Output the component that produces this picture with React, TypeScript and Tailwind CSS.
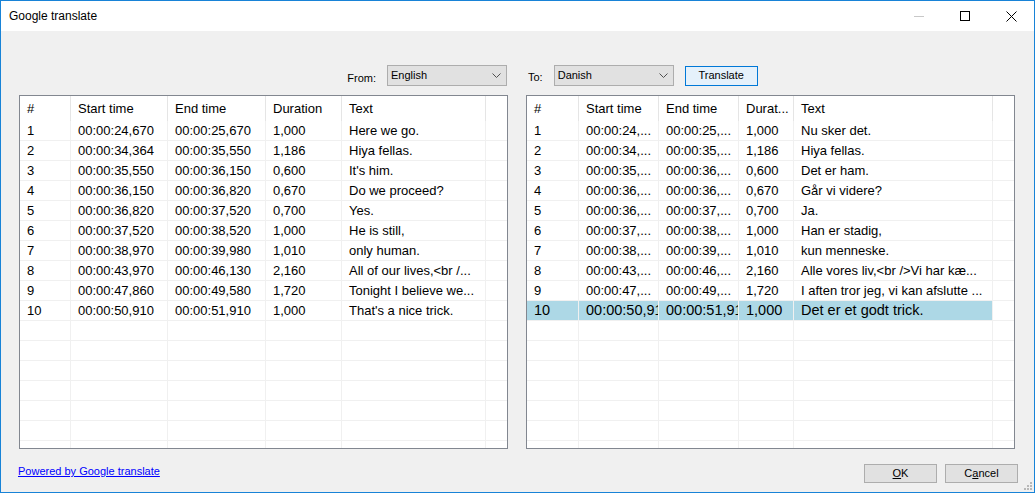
import React from 'react';

type Row = [string, string, string, string, string];

const leftRows: Row[] = [
  ['1', '00:00:24,670', '00:00:25,670', '1,000', 'Here we go.'],
  ['2', '00:00:34,364', '00:00:35,550', '1,186', 'Hiya fellas.'],
  ['3', '00:00:35,550', '00:00:36,150', '0,600', "It's him."],
  ['4', '00:00:36,150', '00:00:36,820', '0,670', 'Do we proceed?'],
  ['5', '00:00:36,820', '00:00:37,520', '0,700', 'Yes.'],
  ['6', '00:00:37,520', '00:00:38,520', '1,000', 'He is still,'],
  ['7', '00:00:38,970', '00:00:39,980', '1,010', 'only human.'],
  ['8', '00:00:43,970', '00:00:46,130', '2,160', 'All of our lives,<br /...'],
  ['9', '00:00:47,860', '00:00:49,580', '1,720', 'Tonight I believe we...'],
  ['10', '00:00:50,910', '00:00:51,910', '1,000', "That's a nice trick."],
];

const rightRows: Row[] = [
  ['1', '00:00:24,...', '00:00:25,...', '1,000', 'Nu sker det.'],
  ['2', '00:00:34,...', '00:00:35,...', '1,186', 'Hiya fellas.'],
  ['3', '00:00:35,...', '00:00:36,...', '0,600', 'Det er ham.'],
  ['4', '00:00:36,...', '00:00:36,...', '0,670', 'Går vi videre?'],
  ['5', '00:00:36,...', '00:00:37,...', '0,700', 'Ja.'],
  ['6', '00:00:37,...', '00:00:38,...', '1,000', 'Han er stadig,'],
  ['7', '00:00:38,...', '00:00:39,...', '1,010', 'kun menneske.'],
  ['8', '00:00:43,...', '00:00:46,...', '2,160', 'Alle vores liv,<br />Vi har kæ...'],
  ['9', '00:00:47,...', '00:00:49,...', '1,720', 'I aften tror jeg, vi kan afslutte ...'],
  ['10', '00:00:50,910', '00:00:51,910', '1,000', 'Det er et godt trick.'],
];

const leftWidths = ['w-[51px]', 'w-[97px]', 'w-[98px]', 'w-[76px]', 'w-[144px]'];
const rightWidths = ['w-[52px]', 'w-[80px]', 'w-[80px]', 'w-[55px]', 'w-[199px]'];

const TOTAL_ROWS = 17;

interface GridProps {
  headers: string[];
  rows: Row[];
  widths: string[];
  selected?: number;
}

const Grid: React.FC<GridProps> = ({ headers, rows, widths, selected }) => {
  const all: (Row | null)[] = [...rows];
  while (all.length < TOTAL_ROWS) all.push(null);

  return (
    <div className="w-[489px] h-[354px] border border-[#828790] bg-white flex flex-col overflow-hidden">
      <div className="h-[25px] flex shrink-0">
        {headers.map((h, i) => (
          <div
            key={h}
            className={`${widths[i]} shrink-0 border-r border-[#e5e5e5] flex items-center pl-[7px] pt-[1px] text-[13px] whitespace-nowrap overflow-hidden`}
          >
            {h}
          </div>
        ))}
        <div className="flex-1" />
      </div>
      {all.map((r, ri) => {
        const isSel = ri === selected;
        return (
          <div key={ri} className="h-[20px] flex shrink-0 border-b border-[#f0f0f0]">
            {widths.map((w, ci) => (
              <div
                key={ci}
                className={`${w} shrink-0 border-r border-[#f0f0f0] flex items-center pl-[7px] pt-[1px] whitespace-nowrap overflow-hidden ${
                  isSel ? 'bg-[#add8e6] text-[14.5px]' : 'text-[13px]'
                }`}
              >
                {r ? r[ci] : ''}
              </div>
            ))}
            <div className="flex-1" />
          </div>
        );
      })}
    </div>
  );
};

const Chevron = () => (
  <svg width="9" height="6" viewBox="0 0 9 6" className="shrink-0">
    <polyline points="0.5,0.5 4.5,4.5 8.5,0.5" fill="none" stroke="#505050" strokeWidth="1" />
  </svg>
);

const Dropdown: React.FC<{ value: string }> = ({ value }) => (
  <div className="w-[120px] h-[21px] bg-[#e1e1e1] border border-[#adadad] flex items-center justify-between pl-[3px] pr-[5px] text-[11px]">
    <span>{value}</span>
    <Chevron />
  </div>
);

const App: React.FC = () => {
  return (
    <div
      className="w-[1035px] h-[493px] border border-[#1883d7] bg-[#f0f0f0] flex flex-col text-black relative overflow-hidden"
      style={{ fontFamily: '"Liberation Sans", Arial, sans-serif' }}
    >
      {/* title bar */}
      <div className="h-[30px] bg-white flex items-center shrink-0">
        <span className="pl-[8px] text-[12px] flex-1">Google translate</span>
        <div className="w-[46px] h-[30px] flex items-center justify-center">
          <svg width="10" height="10" viewBox="0 0 10 10">
            <line x1="0" y1="5.5" x2="10" y2="5.5" stroke="#c8c8c8" strokeWidth="1" />
          </svg>
        </div>
        <div className="w-[46px] h-[30px] flex items-center justify-center">
          <svg width="10" height="10" viewBox="0 0 10 10">
            <rect x="0.5" y="0.5" width="9" height="9" fill="none" stroke="#000" strokeWidth="1" />
          </svg>
        </div>
        <div className="w-[46px] h-[30px] flex items-center justify-center">
          <svg width="11" height="11" viewBox="0 0 11 11">
            <path d="M0.5 0.5 L10.5 10.5 M10.5 0.5 L0.5 10.5" stroke="#000" strokeWidth="1" />
          </svg>
        </div>
      </div>

      {/* body */}
      <div className="flex-1 flex flex-col px-[18px]">
        <div className="flex gap-[18px] mt-[34px] h-[21px] text-[11px]">
          <div className="w-[489px] flex justify-end items-center gap-[11px] pr-[1px]">
            <span className="mt-[5px]">From:</span>
            <Dropdown value="English" />
          </div>
          <div className="w-[489px] flex items-center gap-[11px] pl-[2px]">
            <span className="mt-[4px]">To:</span>
            <Dropdown value="Danish" />
            <div className="w-[73px] h-[20px] bg-[#e5f1fb] border border-[#0078d7] flex items-center justify-center">
              Translate
            </div>
          </div>
        </div>

        <div className="flex gap-[18px] mt-[9px]">
          <Grid
            headers={['#', 'Start time', 'End time', 'Duration', 'Text']}
            rows={leftRows}
            widths={leftWidths}
          />
          <Grid
            headers={['#', 'Start time', 'End time', 'Durat...', 'Text']}
            rows={rightRows}
            widths={rightWidths}
            selected={9}
          />
        </div>

        <div className="flex items-start justify-between mt-[15px] -mr-[2px] text-[11px]">
          <a href="#" className="text-[#0000ff] underline leading-[13px] mt-[1px] -ml-[1px]">
            Powered by Google translate
          </a>
          <div className="flex gap-[8px]">
            <div className="w-[73px] h-[19px] bg-[#e1e1e1] border border-[#adadad] flex items-center justify-center">
              <span>
                <span className="underline">O</span>K
              </span>
            </div>
            <div className="w-[73px] h-[19px] bg-[#e1e1e1] border border-[#adadad] flex items-center justify-center">
              <span>
                C<span className="underline">a</span>ncel
              </span>
            </div>
          </div>
        </div>
      </div>

      {/* resize grip */}
      <svg width="10" height="10" viewBox="0 0 10 10" className="absolute right-[1px] bottom-[1px]">
        <rect x="7" y="1" width="2" height="2" fill="#b8b8b8" />
        <rect x="4" y="4" width="2" height="2" fill="#b8b8b8" />
        <rect x="7" y="4" width="2" height="2" fill="#b8b8b8" />
        <rect x="1" y="7" width="2" height="2" fill="#b8b8b8" />
        <rect x="4" y="7" width="2" height="2" fill="#b8b8b8" />
        <rect x="7" y="7" width="2" height="2" fill="#b8b8b8" />
      </svg>
    </div>
  );
};

export default App;
